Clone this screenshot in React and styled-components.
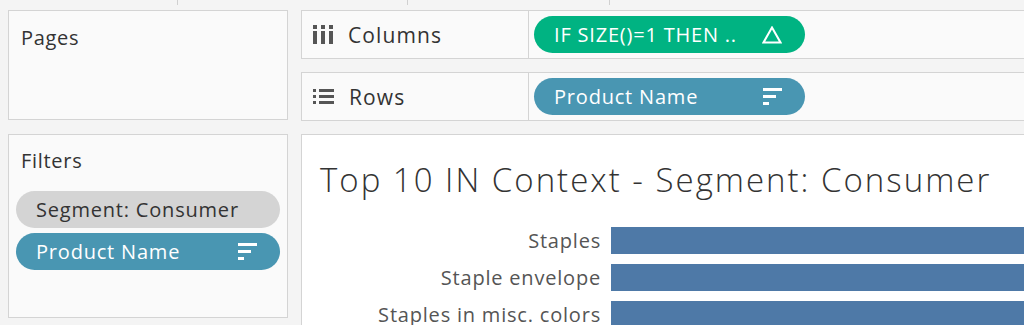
import styled, { createGlobalStyle } from "styled-components";

const GlobalStyle = createGlobalStyle`
  html, body {
    margin: 0;
    padding: 0;
    background: #f4f4f4;
    overflow: hidden;
    font-family: "Open Sans", Lato, sans-serif;
  }
`;

const rows = [
  { name: "Staples", width: 600 },
  { name: "Staple envelope", width: 600 },
  { name: "Staples in misc. colors", width: 600 },
];

const ColumnsIcon = () => (
  <svg width="20" height="19" viewBox="0 0 20 19">
    <rect x="0" y="0" width="4" height="4" fill="#555" />
    <rect x="8" y="0" width="4" height="4" fill="#555" />
    <rect x="16" y="0" width="4" height="4" fill="#555" />
    <rect x="0" y="6" width="4" height="13" fill="#555" />
    <rect x="8" y="6" width="4" height="13" fill="#555" />
    <rect x="16" y="6" width="4" height="13" fill="#555" />
  </svg>
);

const RowsIcon = () => (
  <svg width="21" height="16" viewBox="0 0 21 16">
    <rect x="0" y="0" width="3" height="3" fill="#555" />
    <rect x="6" y="0" width="15" height="3" fill="#555" />
    <rect x="0" y="6" width="3" height="3" fill="#555" />
    <rect x="6" y="6" width="15" height="3" fill="#555" />
    <rect x="0" y="12" width="3" height="3" fill="#555" />
    <rect x="6" y="12" width="15" height="3" fill="#555" />
  </svg>
);

const SortIcon = () => (
  <svg width="19" height="17" viewBox="0 0 19 17">
    <rect x="0" y="0" width="19" height="3" fill="#fff" />
    <rect x="0" y="7" width="13" height="3" fill="#fff" />
    <rect x="0" y="14" width="6" height="3" fill="#fff" />
  </svg>
);

const DeltaIcon = () => (
  <svg width="20" height="18" viewBox="0 0 20 18">
    <polygon points="10,1.5 18.5,16.5 1.5,16.5" fill="none" stroke="#fff" strokeWidth="2" />
  </svg>
);

const App = () => {
  return (
    <>
      <GlobalStyle />
      <TopStrip>
        <StripCell $w={178} />
        <StripCell $w={230} />
        <StripCell $w={202} />
      </TopStrip>
      <Layout>
        <PagesCard>
          <CardTitle>Pages</CardTitle>
        </PagesCard>
        <Shelf>
          <ShelfLabel>
            <ColumnsIcon />
            <span>Columns</span>
          </ShelfLabel>
          <ShelfBody>
            <Pill $bg="#00b382">
              <span>IF SIZE()=1 THEN ..</span>
              <DeltaIcon />
            </Pill>
          </ShelfBody>
        </Shelf>
        <Shelf>
          <ShelfLabel>
            <RowsIcon />
            <span>Rows</span>
          </ShelfLabel>
          <ShelfBody>
            <Pill $bg="#4996b2">
              <span>Product Name</span>
              <SortIcon />
            </Pill>
          </ShelfBody>
        </Shelf>
        <FiltersCard>
          <CardTitle>Filters</CardTitle>
          <FilterList>
            <Pill $bg="#d4d4d4" $color="#333" $w={264}>
              <span>Segment: Consumer</span>
            </Pill>
            <Pill $bg="#4996b2" $w={264}>
              <span>Product Name</span>
              <SortIcon />
            </Pill>
          </FilterList>
        </FiltersCard>
        <ChartCard>
          <ChartTitle>Top 10 IN Context - Segment: Consumer</ChartTitle>
          <BarList>
            {rows.map((r) => (
              <BarRow key={r.name}>
                <BarLabel>{r.name}</BarLabel>
                <Bar style={{ width: r.width }} />
              </BarRow>
            ))}
          </BarList>
        </ChartCard>
      </Layout>
    </>
  );
};

const TopStrip = styled.div`
  display: flex;
  height: 5px;
`;

const StripCell = styled.div`
  width: ${(p) => p.$w}px;
  border-right: 1px solid #d0d0d0;
  box-sizing: border-box;
`;

const Layout = styled.div`
  display: grid;
  grid-template-columns: 280px 780px;
  grid-template-rows: 49px 49px 200px;
  column-gap: 13px;
  row-gap: 13px;
  padding: 5px 0 0 8px;
`;

const Card = styled.div`
  background: #fafafa;
  border: 1px solid #d4d4d4;
  box-sizing: border-box;
  padding: 13px 7px;
`;

const PagesCard = styled(Card)`
  grid-row: span 2;
  height: 110px;
  padding-top: 14px;
`;

const FiltersCard = styled(Card)`
  height: 184px;
`;

const CardTitle = styled.div`
  font-size: 20px;
  letter-spacing: 0.7px;
  color: #333;
  line-height: 26px;
  padding-left: 5px;
`;

const FilterList = styled.div`
  display: flex;
  flex-direction: column;
  gap: 5px;
  margin-top: 17px;
`;

const Shelf = styled.div`
  display: flex;
  align-items: stretch;
  background: #fafafa;
  border: 1px solid #d4d4d4;
  border-right: none;
  box-sizing: border-box;
`;

const ShelfLabel = styled.div`
  display: flex;
  align-items: center;
  gap: 15px;
  width: 227px;
  padding-left: 11px;
  box-sizing: border-box;
  border-right: 1px solid #d4d4d4;
  font-size: 21px;
  letter-spacing: 1.1px;
  color: #333;
`;

const ShelfBody = styled.div`
  display: flex;
  align-items: center;
  padding-left: 5px;
`;

const Pill = styled.div`
  display: flex;
  align-items: center;
  justify-content: space-between;
  width: ${(p) => p.$w || 271}px;
  height: 37px;
  box-sizing: border-box;
  padding: 0 23px 0 20px;
  border-radius: 19px;
  background: ${(p) => p.$bg};
  color: ${(p) => p.$color || "#fff"};
  font-size: 20px;
  letter-spacing: 0.8px;
  white-space: nowrap;
`;

const ChartCard = styled.div`
  background: #fff;
  border: 1px solid #d4d4d4;
  border-right: none;
  box-sizing: border-box;
  padding: 25px 0 0 18px;
`;

const ChartTitle = styled.div`
  font-size: 33px;
  font-weight: 300;
  letter-spacing: 2px;
  color: #333;
  line-height: 40px;
`;

const BarList = styled.div`
  display: flex;
  flex-direction: column;
  gap: 10px;
  margin-top: 27px;
`;

const BarRow = styled.div`
  display: flex;
  align-items: center;
  gap: 10px;
  margin-left: -18px;
`;

const BarLabel = styled.div`
  flex-shrink: 0;
  width: 299px;
  text-align: right;
  font-size: 20px;
  letter-spacing: 0.8px;
  color: #555;
`;

const Bar = styled.div`
  flex-shrink: 0;
  height: 27px;
  background: #4e79a7;
`;

export default App;
